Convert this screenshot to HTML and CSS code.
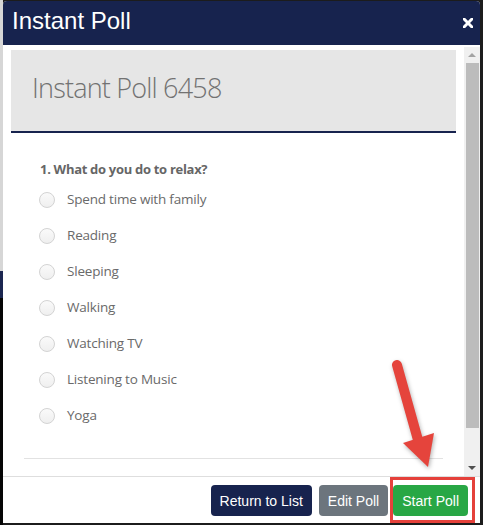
FILE: index.html
```html
<!DOCTYPE html>
<html>
<head>
<meta charset="utf-8">
<link rel="stylesheet" href="styles.css">
</head>
<body>
<div class="modal">
  <div class="modal-header">
    <h1 class="modal-title">Instant Poll</h1>
    <svg class="close" width="10" height="10" viewBox="0 0 10 10"><path d="M1 1L9 9M9 1L1 9" stroke="#fff" stroke-width="3" stroke-linecap="square"/></svg>
  </div>
  <div class="modal-body">
    <div class="scroll-content">
      <div class="poll-head"><span class="poll-name">Instant Poll 6458</span></div>
      <div class="question">1. What do you do to relax?</div>
      <ul class="options">
        <li class="option"><span class="radio"></span><span class="label">Spend time with family</span></li>
        <li class="option"><span class="radio"></span><span class="label">Reading</span></li>
        <li class="option"><span class="radio"></span><span class="label">Sleeping</span></li>
        <li class="option"><span class="radio"></span><span class="label">Walking</span></li>
        <li class="option"><span class="radio"></span><span class="label">Watching TV</span></li>
        <li class="option"><span class="radio"></span><span class="label">Listening to Music</span></li>
        <li class="option"><span class="radio"></span><span class="label">Yoga</span></li>
      </ul>
      <div class="divider"></div>
    </div>
    <div class="scrollbar">
      <div class="sb-btn"><span class="arrow-up"></span></div>
      <div class="sb-track"><div class="sb-thumb"></div></div>
      <div class="sb-btn"><span class="arrow-down"></span></div>
    </div>
  </div>
  <div class="modal-footer">
    <button class="btn btn-navy">Return to List</button>
    <button class="btn btn-grey">Edit Poll</button>
    <button class="btn btn-green">Start Poll</button>
  </div>
</div>
<div class="highlight"></div>
<svg class="callout" width="483" height="525" viewBox="0 0 483 525">
  <line x1="397" y1="365" x2="418" y2="440" stroke="#e5443c" stroke-width="10" stroke-linecap="round"/>
  <polygon points="403,443 434,433 428,467" fill="#e5443c"/>
</svg>
</body>
</html>
```

FILE: styles.css
```css
html, body {
  margin: 0;
  padding: 0;
}
body {
  width: 483px;
  height: 525px;
  overflow: hidden;
  position: relative;
  background:
    linear-gradient(to bottom, #d6d6d6 0 271px, #1b2650 271px 298px, #050505 298px) left top / 3px 100% no-repeat,
    #1c1c1c;
  font-family: "Open Sans", "Noto Sans", sans-serif;
}
.modal {
  width: 477px;
  height: 522px;
  margin: 1px 0 0 3px;
  background: #fff;
  display: flex;
  flex-direction: column;
  border-radius: 4px 4px 0 0;
  overflow: hidden;
}
.modal-header {
  height: 44px;
  flex: none;
  box-sizing: border-box;
  background: #17234e;
  display: flex;
  align-items: flex-start;
  justify-content: space-between;
  padding: 8px 7px 0 9px;
}
.modal-title {
  margin: 0;
  font-family: "Liberation Sans", Arial, sans-serif;
  font-weight: normal;
  font-size: 24px;
  line-height: 24px;
  color: #fff;
}
.close {
  margin-top: 9px;
  display: block;
}
.modal-body {
  flex: 1;
  display: flex;
  padding-top: 2px;
  min-height: 0;
}
.scroll-content {
  flex: 1;
  padding: 3px 8px 0 8px;
  overflow: hidden;
}
.poll-head {
  background: #e6e6e6;
  border-bottom: 2px solid #17234e;
  display: flex;
  align-items: center;
  padding: 0 0 6px 21px;
  height: 75px;
}
.poll-name {
  font-weight: 300;
  font-size: 27px;
  letter-spacing: -0.8px;
  color: #727272;
}
.question {
  margin: 27px 0 0 29px;
  font-weight: 700;
  font-size: 13px;
  line-height: 18px;
  letter-spacing: -0.3px;
  color: #666;
}
.options {
  list-style: none;
  margin: 4px 0 0 0;
  padding: 0;
}
.option {
  height: 36px;
  display: flex;
  align-items: center;
  padding-left: 28px;
}
.radio {
  width: 14px;
  height: 14px;
  border: 1px solid #d3d3d3;
  border-radius: 50%;
  background: linear-gradient(#fafafa, #efefef);
  flex: none;
}
.label {
  margin-left: 12px;
  margin-bottom: 3px;
  font-size: 13.5px;
  letter-spacing: -0.2px;
  color: #6a6a6a;
}
.divider {
  margin: 24px 0 0 13px;
  width: 419px;
  height: 1px;
  background: #e2e2e2;
}
.scrollbar {
  width: 16px;
  flex: none;
  background: #f0f0f0;
  display: flex;
  flex-direction: column;
}
.sb-btn {
  height: 16px;
  display: flex;
  align-items: center;
  justify-content: center;
  flex: none;
}
.arrow-up {
  width: 0;
  height: 0;
  border-left: 4px solid transparent;
  border-right: 4px solid transparent;
  border-bottom: 4px solid #a3a3a3;
}
.arrow-down {
  width: 0;
  height: 0;
  border-left: 4px solid transparent;
  border-right: 4px solid transparent;
  border-top: 4px solid #505050;
}
.sb-track {
  flex: 1;
  padding: 0 1px 0 2px;
  display: flex;
  flex-direction: column;
}
.sb-thumb {
  height: 365px;
  background: #bcbcbc;
}
.modal-footer {
  flex: none;
  height: 38px;
  border-top: 1px solid #dedede;
  display: flex;
  justify-content: flex-end;
  align-items: flex-start;
  padding: 8px 12px 0 0;
}
.btn {
  height: 31px;
  padding: 0 9px;
  border: none;
  border-radius: 4px;
  font-family: "Liberation Sans", Arial, sans-serif;
  font-size: 14px;
  color: #fff;
}
.btn-navy {
  background: #17234e;
  margin-right: 7px;
}
.btn-grey {
  background: #6c757d;
  margin-right: 5px;
}
.btn-green {
  background: #28a745;
}
.highlight {
  position: absolute;
  left: 390px;
  top: 477px;
  width: 79px;
  height: 40px;
  border: 3px solid #e5413b;
}
.callout {
  position: absolute;
  left: 0;
  top: 0;
  pointer-events: none;
  filter: drop-shadow(1px 2px 2px rgba(0, 0, 0, 0.3));
}
```
